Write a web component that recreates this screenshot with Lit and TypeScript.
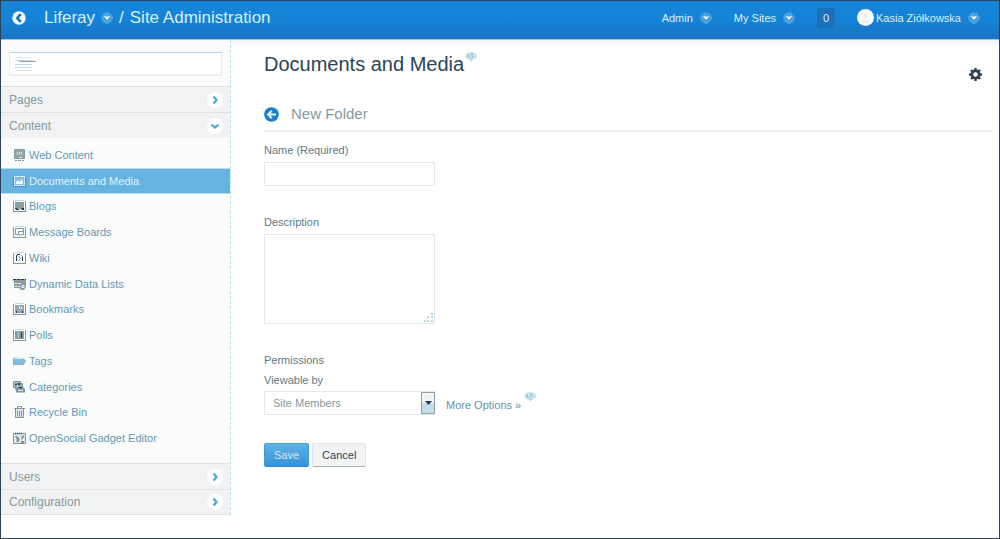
import { LitElement, html, css, svg } from "lit";
import { customElement, state } from "lit/decorators.js";
import { classMap } from "lit/directives/class-map.js";

interface Item {
  label: string;
  icon: unknown;
}

// Menu icons share a 13 x 12 grid.
const frame = svg`<path d="M.5 1v10.500M12.500 1v10.500M0 11.500h13" stroke="#7f989e" fill="none"/><path d="M2 .5h9" stroke="#b9dbe4" fill="none"/>`;

const items: Item[] = [
  {
    label: "Web Content",
    icon: svg`<path d="M1 1h11v8H1z" fill="#93a7ab"/><path d="M1.500.5h10v9h-10z" fill="none" stroke="#7f9aa1"/><path d="M2 11.500h2M5 11.500h3M9 11.500h2" stroke="#7f989e"/><path d="M4 3h1v3H4zM6 3h1v3H6zM8 3h1v2H8z" fill="#d5e6ea"/><path d="M6 8h3v1H6z" fill="#dfeaec"/>`,
  },
  {
    label: "Documents and Media",
    icon: svg`<path d="M1.500 1.500h10v9h-10z" fill="#7fc0e6" stroke="#d8eaf3"/><path d="M3 9V7l2-2 2 2 1-3 2 2v3z" fill="#f2f8fb"/><path d="M.5 3v8.500h12V3" fill="none" stroke="#35678d" stroke-dasharray="1 1"/>`,
  },
  {
    label: "Blogs",
    icon: svg`${frame}<path d="M2 2h9v7H2z" fill="#8b9fa3"/><path d="M2 2l2 1-2 4z" fill="#5fb1de"/><path d="M2 8h2v1h2v1H3zM8 8h3v2H9z" fill="#24384a"/>`,
  },
  {
    label: "Message Boards",
    icon: svg`${frame}<path d="M2.500 2.500h8v4M2.500 2.500v6H5" fill="none" stroke="#7f989e"/><path d="M5.500 5.500h5v3h-2l-2 1v-1h-1z" fill="#fff" stroke="#7f989e"/>`,
  },
  {
    label: "Wiki",
    icon: svg`${frame}<path d="M3.500 3v6M4 2.500h3M9.500 5v4" stroke="#24384a" fill="none"/><path d="M5.500 4l2 2.500-2 2.500M8 3l2 2" stroke="#7f989e" fill="none"/>`,
  },
  {
    label: "Dynamic Data Lists",
    icon: svg`<path d="M0 1h13v8l-2 3H8L6 10H1V3H0z" fill="#8b9fa3"/><path d="M0 1.500h13" stroke="#24384a" stroke-dasharray="3 1"/><path d="M2 5.500h2M5 5.500h3M2 8.500h2M5 8.500h2M9 7.500h2v2H9z" stroke="#eef3f4" fill="none"/>`,
  },
  {
    label: "Bookmarks",
    icon: svg`${frame}<path d="M2 2h9v8H2z" fill="#93a7ab"/><path d="M6 3h1v3H6zM8 4h1v2H8z" fill="#fff"/><path d="M3 8h1v2H3zM9 8h1v2H9z" fill="#24384a"/>`,
  },
  {
    label: "Polls",
    icon: svg`${frame}<path d="M2 2h9v8H2z" fill="#8b9fa3"/><path d="M5.500 2v7" stroke="#a9bbbf"/><path d="M8.500 3v6" stroke="#24384a"/>`,
  },
  {
    label: "Tags",
    icon: svg`<path d="M.5 3v6.500h10L12.500 6l-2-2.500z" fill="#7ebfe0" stroke="#93adb3"/><path d="M1 3.500h9" stroke="#dfeff4"/>`,
  },
  {
    label: "Categories",
    icon: svg`<path d="M.5.5h7v6h-7zM2.500 2.500h7v6h-7z" fill="#a9bbbf" stroke="#7f989e"/><path d="M3 6h7l2 2v3.500H3z" fill="#7f989e"/><path d="M2 3h2v1H2zM5 2h2v2H5zM6 6h3v1H6z" fill="#24384a"/><path d="M5 9.500h5" stroke="#e7edef"/>`,
  },
  {
    label: "Recycle Bin",
    icon: svg`<path d="M1 2.500h11M4.500 2V.5h4V2" fill="none" stroke="#7f989e"/><path d="M2.500 3v8.500h8V3" fill="#e4ebed" stroke="#7f989e"/><path d="M4.500 4.500v6M6.500 4.500v6M8.500 4.500v6" stroke="#7f989e"/>`,
  },
  {
    label: "OpenSocial Gadget Editor",
    icon: svg`<path d="M.5 1.500h12v10H.5z" fill="#e3eaec" stroke="#7f989e"/><path d="M2 1.500h7" stroke="#3f7fa8" stroke-width="2" stroke-dasharray="1 1"/><path d="M2 4h2l2 2 1 2-2 2H3l1-2zM8 5l3-2v2L9 8zM8 9h3v2H8z" fill="#7f989e"/>`,
  },
];

@customElement("app-root")
export class AppRoot extends LitElement {
  @state() private selected = "Documents and Media";

  static styles = css`
    :host {
      display: block;
      box-sizing: border-box;
      min-height: 100vh;
      border: 1px solid #2f4156;
      background: #fff;
      color: #6f8990;
      font: 11px/20px "Liberation Sans", Arial, sans-serif;
    }
    *, *::before, *::after { box-sizing: border-box; }
    a { color: inherit; text-decoration: none; }
    svg { display: block; flex: none; }
    h1, h2, ul { margin: 0; padding: 0; font-weight: 400; list-style: none; }
    button, input, select, textarea { font: inherit; color: inherit; margin: 0; }
    .dockbar {
      display: flex;
      align-items: center;
      justify-content: space-between;
      height: 39px;
      padding: 0 19px 5px 10px;
      color: #d9eefa;
      background: linear-gradient(#1585d9, #1583d6 50%, #1a73c1);
      border-bottom: 1px solid #9acbe6;
    }
    .brand, .account, .menu, .user { display: flex; align-items: center; }
    .brand { gap: 17px; }
    .crumbs { display: flex; align-items: center; gap: 6px; font-size: 17px; }
    .account { gap: 22px; }
    .menu { gap: 7px; }
    .user { gap: 2px; }
    .dockbar .count { width: 18px; background: #1a70b9; border-radius: 2px; }
    .bare { padding: 0; border: 0; background: none; cursor: pointer; }
    .body { display: grid; grid-template-columns: 230px 1fr; align-items: start; }
    .side { background: #fafbfb; border-right: 1px dashed #b9dfea; }
    .search { position: relative; padding: 12px 8px 10px; }
    .search input {
      display: block;
      width: 100%;
      height: 24px;
      padding: 0 8px;
      border: 1px solid #e6e9ea;
      border-top-color: #b4dbe7;
      border-bottom: 2px solid #eceeef;
      background: #fff;
    }
    .search svg { position: absolute; left: 13px; top: 15px; pointer-events: none; }
    .section {
      display: flex;
      align-items: center;
      justify-content: space-between;
      width: 100%;
      height: 26px;
      padding: 0 7px 0 8px;
      border: 0;
      border-top: 1px dotted #b4dbe7;
      background: #f0f2f3;
      color: #859ba0;
      font-size: 12px;
      cursor: pointer;
    }
    .section.last { border-bottom: 1px dotted #b4dbe7; }
    .items { display: grid; grid-auto-rows: 1fr; height: 325px; padding: 4px 0 12px; }
    .items a { display: flex; align-items: center; gap: 3px; height: 100%; padding: 0 12px; color: #6599b3; }
    .items a.on { color: #e3f1f9; background: #66b3e2; border: solid #b9dde9; border-width: 1px 0; }
    .main {
      padding: 0 7px 24px 33px;
      background: linear-gradient(#f3f5f6, #fff 8px);
    }
    .top { display: flex; justify-content: space-between; padding: 12px 10px 0 0; }
    .title { display: flex; gap: 1px; }
    h1 { font-size: 20px; line-height: 24px; color: #2b4458; }
    .gear { padding-top: 16px; }
    .heading { display: flex; align-items: center; gap: 12px; margin-top: 22px; padding-bottom: 5px; border-bottom: 2px solid #eceeef; }
    h2 { font-size: 15px; line-height: 22px; color: #859ba0; }
    form { padding-top: 8px; }
    .field { width: 171px; }
    .label { display: block; color: #60797f; }
    .field input, .field textarea, .pick select {
      display: block;
      width: 171px;
      height: 24px;
      border: 1px solid #e6e9ea;
      border-radius: 0;
      background: #fff;
      padding: 0 8px;
    }
    .field input { margin-top: 2px; }
    .area { position: relative; margin-top: 26px; }
    .area textarea { height: 90px; margin-top: 2px; padding: 4px 8px; resize: none; }
    .area svg { position: absolute; right: 2px; bottom: 2px; pointer-events: none; }
    .perms { margin-top: 26px; }
    .row { display: flex; align-items: center; gap: 11px; margin-top: 1px; }
    .pick { position: relative; }
    .pick select { appearance: none; padding: 0 20px 0 8px; color: #829aa0; }
    .pick svg { position: absolute; right: 0; top: 1px; pointer-events: none; }
    .more { display: flex; gap: 3px; color: #5f93ac; }
    .more a { padding-top: 3px; }
    .actions { display: flex; gap: 3px; margin-top: 28px; }
    .btn { height: 24px; padding: 0 9px; border: 1px solid #dfe6e8; border-radius: 2px; background: #f1f3f4; color: #2b4458; border-bottom-color: #a3b2b7; }
    .btn.primary { border-color: #4aa6df #3d9ad8 #3187c6; background: linear-gradient(#5fb3e4, #3494d8); color: #cfe7f5; }
  `;

  private burst() {
    return html`<svg width="12" height="12" viewBox="0 0 12 12" aria-hidden="true">
      <circle cx="6" cy="6" r="5" fill="#3d9ade"/>
      <circle cx="6" cy="6" r="5.300" fill="none" stroke="#9fd0ef" stroke-dasharray="1 1.200"/>
      <circle cx="6" cy="6" r="3.500" fill="none" stroke="#7cc0ec" stroke-dasharray="1 1"/>
      <path d="M3 4.500l1.500-.5L6 5l1.500-1L9 4.500 6 8z" fill="#f0f8fc"/>
    </svg>`;
  }

  private help() {
    return html`<svg width="12" height="10" viewBox="0 0 12 10" aria-hidden="true">
      <ellipse cx="6" cy="4" rx="5.500" ry="3.500" fill="#c9e4ed" stroke="#a9d2e0" stroke-dasharray="1.500 1"/>
      <path d="M5 7h3L6.500 9.500z" fill="#a9d2e0"/>
      <path d="M3 3h1v2H3zM6 2h2v1H6zM7 4h1v1H7zM5 5h1v1H5z" fill="#6fa3b5"/>
    </svg>`;
  }

  private section(label: string, open = false, last = false) {
    return html`<button class=${classMap({ section: true, last })} aria-expanded=${open ? "true" : "false"}>
      <span>${label}</span>
      <svg width="16" height="16" viewBox="0 0 16 16" aria-hidden="true">
        <circle cx="8" cy="8" r="8" fill="#fff"/>
        <path d=${open ? "M4.500 6.500L8 9.500l3.500-3" : "M6.500 4.500L9.500 8l-3 3.500"} fill="none" stroke="#4ba6dc" stroke-width="2.200"/>
      </svg>
    </button>`;
  }

  render() {
    return html`
      <header class="dockbar">
        <div class="brand">
          <a href="#back" aria-label="Back">
            <svg width="16" height="14" viewBox="0 0 16 14"><circle cx="8" cy="7" r="6.700" fill="#f2f9fd"/><path d="M9.800 3.200L6.200 7l3.600 3.800" fill="none" stroke="#1470bb" stroke-width="2.400"/></svg>
          </a>
          <nav class="crumbs" aria-label="Breadcrumb">
            <a href="#liferay">Liferay</a>${this.burst()}<span>/</span><a href="#admin">Site Administration</a>
          </nav>
        </div>
        <div class="account">
          <button class="bare menu">Admin ${this.burst()}</button>
          <button class="bare menu">My Sites ${this.burst()}</button>
          <button class="bare count">0</button>
          <button class="bare menu">
            <span class="user">
              <svg width="17" height="17" viewBox="0 0 17 17" aria-hidden="true"><circle cx="8.500" cy="8.500" r="8.500" fill="#fafcfd"/><path d="M7 5h3v4H7zM5 11h7v3H5z" fill="#eceff0"/></svg>
              Kasia Ziółkowska
            </span>
            ${this.burst()}
          </button>
        </div>
      </header>
      <div class="body">
        <aside class="side">
          <div class="search">
            <input type="search" aria-label="Search" />
            <svg width="23" height="18" viewBox="0 0 23 18" aria-hidden="true">
              <path d="M3 2.500h14M2 15.500h16" stroke="#dde9ed"/>
              <path d="M1 5.500h18M1 9.500h17M1 12.500h17" stroke="#b9dce6"/>
              <path d="M5 6.500h17" stroke="#93a7ab"/>
            </svg>
          </div>
          ${this.section("Pages")} ${this.section("Content", true)}
          <ul class="items">
            ${items.map(
              (i) => html`<li>
                <a href="#" class=${classMap({ on: i.label === this.selected })} @click=${() => (this.selected = i.label)}>
                  <svg width="13" height="12" viewBox="0 0 13 12" aria-hidden="true">${i.icon}</svg>${i.label}
                </a>
              </li>`
            )}
          </ul>
          ${this.section("Users")} ${this.section("Configuration", false, true)}
        </aside>
        <main class="main">
          <div class="top">
            <div class="title"><h1>Documents and Media</h1>${this.help()}</div>
            <button class="bare gear" aria-label="Settings">
              <svg width="13" height="13" viewBox="0 0 13 13">
                <circle cx="6.500" cy="6.500" r="3.600" fill="none" stroke="#2f4156" stroke-width="2.600"/>
                <path d="M6.500 0v2.500M6.500 10.500V13M0 6.500h2.500M10.500 6.500H13M2 2l1.700 1.700M9.300 9.300L11 11M2 11l1.700-1.700M9.300 3.700L11 2" stroke="#2f4156" stroke-width="2.400"/>
              </svg>
            </button>
          </div>
          <div class="heading">
            <a href="#documents" aria-label="Back to Documents and Media">
              <svg width="15" height="15" viewBox="0 0 15 15"><circle cx="7.500" cy="7.500" r="7.300" fill="#1480d2"/><path d="M12 7.500H4.500M7.800 3.800L4 7.500l3.800 3.700" fill="none" stroke="#e8f5fc" stroke-width="2"/></svg>
            </a>
            <h2>New Folder</h2>
          </div>
          <form @submit=${(e: Event) => e.preventDefault()}>
            <div class="field">
              <label class="label" for="name">Name (Required)</label>
              <input id="name" type="text" />
            </div>
            <div class="field area">
              <label class="label" for="description">Description</label>
              <textarea id="description"></textarea>
              <svg width="9" height="9" viewBox="0 0 9 9" aria-hidden="true"><path d="M7 0h2v2H7zM7 3h2v2H7zM7 7h2v2H7zM3 3h2v2H3zM3 7h2v2H3zM0 7h2v2H0z" fill="#b4dbe7"/></svg>
            </div>
            <div class="perms">
              <span class="label">Permissions</span>
              <label class="label" for="view">Viewable by</label>
              <div class="row">
                <div class="pick">
                  <select id="view"><option>Site Members</option></select>
                  <svg width="14" height="22" viewBox="0 0 14 22" aria-hidden="true"><path d="M.5.5h13v21H.5z" fill="#f1f3f4" stroke="#8ea3a9"/><path d="M1 11h12v10H1z" fill="#bfe0ea"/><path d="M4 9h7l-3.500 4z" fill="#24384a"/></svg>
                </div>
                <div class="more"><a href="#more">More Options »</a>${this.help()}</div>
              </div>
            </div>
            <div class="actions">
              <button class="btn primary" type="submit">Save</button>
              <button class="btn" type="button">Cancel</button>
            </div>
          </form>
        </main>
      </div>
    `;
  }
}
